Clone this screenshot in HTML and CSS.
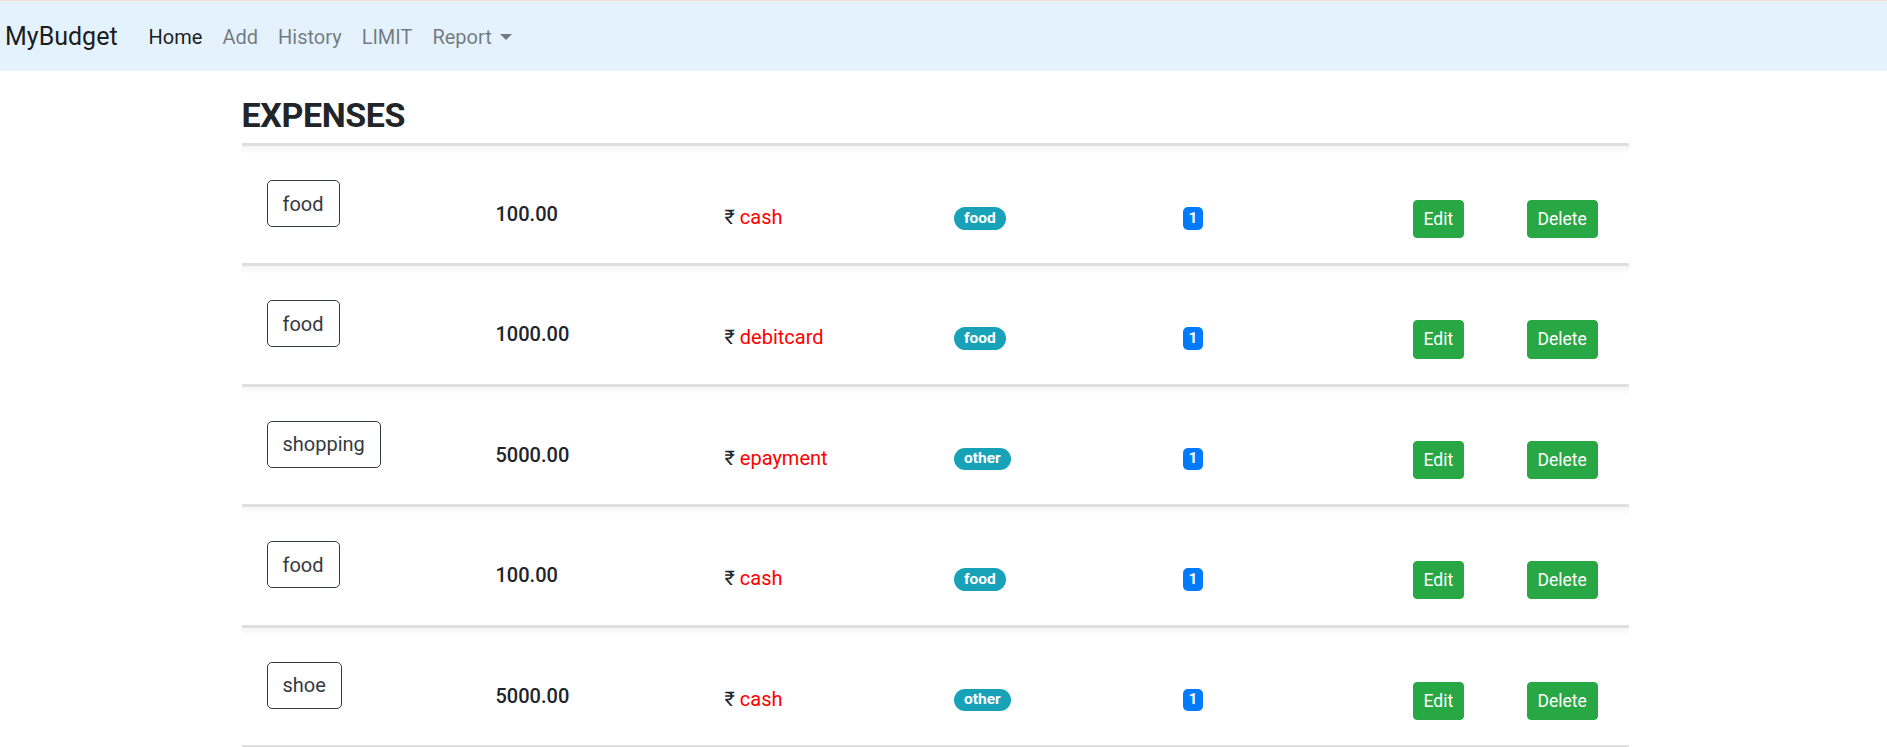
FILE: index.html
```html
<!DOCTYPE html>
<html lang="en">
<head>
<meta charset="utf-8">
<title>MyBudget</title>
<link rel="stylesheet" href="styles.css">
</head>
<body>
<nav class="navbar">
  <a class="brand" href="#">MyBudget</a>
  <ul class="nav">
    <li><a class="nav-link active" href="#">Home</a></li>
    <li><a class="nav-link" href="#">Add</a></li>
    <li><a class="nav-link" href="#">History</a></li>
    <li><a class="nav-link" href="#">LIMIT</a></li>
    <li><a class="nav-link dropdown" href="#">Report<span class="caret"></span></a></li>
  </ul>
</nav>
<main class="page">
  <div class="container">
    <h3 class="title">EXPENSES</h3>
    <ul class="list">
      <li class="item">
        <div class="cell"><span class="cat">food</span></div>
        <div class="cell amt">100.00</div>
        <div class="cell mode">₹ <span class="pay">cash</span></div>
        <div class="cell badge-cell"><span class="pill">food</span></div>
        <div class="cell badge-cell"><span class="count">1</span></div>
        <div class="cell btn-cell"><button class="btn">Edit</button></div>
        <div class="cell btn-cell"><button class="btn">Delete</button></div>
      </li>
      <li class="item">
        <div class="cell"><span class="cat">food</span></div>
        <div class="cell amt">1000.00</div>
        <div class="cell mode">₹ <span class="pay">debitcard</span></div>
        <div class="cell badge-cell"><span class="pill">food</span></div>
        <div class="cell badge-cell"><span class="count">1</span></div>
        <div class="cell btn-cell"><button class="btn">Edit</button></div>
        <div class="cell btn-cell"><button class="btn">Delete</button></div>
      </li>
      <li class="item">
        <div class="cell"><span class="cat">shopping</span></div>
        <div class="cell amt">5000.00</div>
        <div class="cell mode">₹ <span class="pay">epayment</span></div>
        <div class="cell badge-cell"><span class="pill">other</span></div>
        <div class="cell badge-cell"><span class="count">1</span></div>
        <div class="cell btn-cell"><button class="btn">Edit</button></div>
        <div class="cell btn-cell"><button class="btn">Delete</button></div>
      </li>
      <li class="item">
        <div class="cell"><span class="cat">food</span></div>
        <div class="cell amt">100.00</div>
        <div class="cell mode">₹ <span class="pay">cash</span></div>
        <div class="cell badge-cell"><span class="pill">food</span></div>
        <div class="cell badge-cell"><span class="count">1</span></div>
        <div class="cell btn-cell"><button class="btn">Edit</button></div>
        <div class="cell btn-cell"><button class="btn">Delete</button></div>
      </li>
      <li class="item">
        <div class="cell"><span class="cat">shoe</span></div>
        <div class="cell amt">5000.00</div>
        <div class="cell mode">₹ <span class="pay">cash</span></div>
        <div class="cell badge-cell"><span class="pill">other</span></div>
        <div class="cell badge-cell"><span class="count">1</span></div>
        <div class="cell btn-cell"><button class="btn">Edit</button></div>
        <div class="cell btn-cell"><button class="btn">Delete</button></div>
      </li>
    </ul>
  </div>
</main>
</body>
</html>
```

FILE: styles.css
```css
* { box-sizing: border-box; }

html, body {
  margin: 0;
  padding: 0;
}

body {
  font-family: "Segoe UI", Roboto, "Open Sans", "Liberation Sans", sans-serif;
  font-size: 20px;
  line-height: 1.5;
  color: #212529;
  background: #fff;
}

/* ---------- navbar ---------- */
.navbar {
  display: flex;
  align-items: center;
  height: 71px;
  padding: 11px 5px 10px;
  background: #e3f2fd;
  border-top: 1px solid #f7dccd;
}

.brand {
  font-size: 25px;
  line-height: 37.5px;
  color: rgba(0, 0, 0, 0.9);
  text-decoration: none;
  margin-right: 21px;
}

.nav {
  display: flex;
  list-style: none;
  margin: 0;
  padding: 0;
}

.nav-link {
  display: block;
  padding: 10px;
  line-height: 30px;
  color: rgba(0, 0, 0, 0.5);
  text-decoration: none;
}

.nav-link.active {
  color: rgba(0, 0, 0, 0.9);
}

.caret {
  display: inline-block;
  margin-left: 8px;
  vertical-align: 4px;
  border-top: 6px solid rgba(0, 0, 0, 0.5);
  border-left: 6px solid transparent;
  border-right: 6px solid transparent;
}

/* ---------- page ---------- */
.page {
  padding-right: 17px;
}

.container {
  max-width: 1387px;
  margin: 0 auto;
}

.title {
  font-size: 34px;
  font-weight: 700;
  letter-spacing: -0.4px;
  line-height: 42px;
  margin: 23px 0 0;
  padding-bottom: 7px;
  border-bottom: 3px solid #dfdfdf;
}

.list {
  list-style: none;
  margin: 0;
  padding: 0;
}

.item {
  display: grid;
  grid-template-columns: 229px 229px 229px 229px 230px 114px 1fr;
  align-items: start;
  height: 120.4px;
  padding-left: 25px;
  border-bottom: 3px solid #dfdfdf;
  background: linear-gradient(to bottom, #f6f6f6 0, #fff 8px);
}

.cell {
  min-width: 0;
}

.cat {
  display: inline-block;
  margin-top: 34px;
  padding: 7.5px 15px;
  line-height: 30px;
  border: 1px solid #343a40;
  border-radius: 5px;
  color: #343a40;
}

.amt {
  margin-top: 53px;
  line-height: 30px;
  font-weight: 500;
  color: #212529;
}

.mode {
  margin-top: 56px;
  line-height: 30px;
  color: #212529;
}

.pay {
  color: #ff0000;
}

.badge-cell {
  margin-top: 61px;
  line-height: 1;
}

.pill,
.count {
  display: inline-block;
  font-size: 15.5px;
  font-weight: 700;
  line-height: 1;
  color: #fff;
  white-space: nowrap;
  vertical-align: top;
}

.pill {
  padding: 3.5px 10.5px;
  background: #17a2b8;
  border-radius: 15px;
}

.count {
  padding: 3.5px 6px;
  background: #007bff;
  border-radius: 5px;
}

.btn-cell {
  margin-top: 54px;
}

.btn {
  display: inline-block;
  font-family: inherit;
  font-size: 17.5px;
  line-height: 1.5;
  padding: 5px 10px;
  color: #fff;
  background: #28a745;
  border: 1px solid #28a745;
  border-radius: 4px;
}
```
